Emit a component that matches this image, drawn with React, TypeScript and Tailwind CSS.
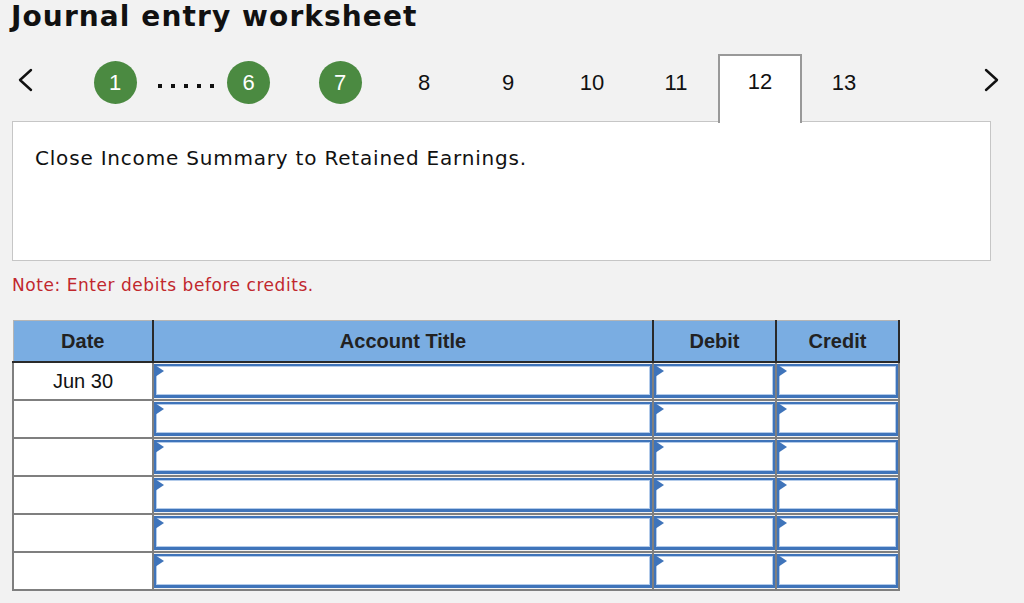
import React from "react";

// ── Data ───────────────────────────────────────────────────────────────────────

const ROWS = ["Jun 30", "", "", "", "", ""];
const PLAIN_STEPS = ["8", "9", "10", "11"];

// ── Pieces ─────────────────────────────────────────────────────────────────────

function Chevron({ dir }: { dir: "left" | "right" }) {
  return (
    <svg width="16" height="24" viewBox="0 0 16 24" fill="none">
      <polyline
        points={dir === "left" ? "14,2 3,12 14,22" : "2,2 13,12 2,22"}
        stroke="#111"
        strokeWidth="2.4"
        strokeLinecap="round"
        strokeLinejoin="round"
      />
    </svg>
  );
}

function DoneStep({ n }: { n: string }) {
  return (
    <div className="w-[43px] h-[43px] rounded-full bg-[#4b8a41] text-white flex items-center justify-center text-[22px]">
      {n}
    </div>
  );
}

function InputCell() {
  return (
    <td className="p-0 border-2 border-[#7f7f7f] h-[38px]">
      <div className="relative h-[34px] bg-white border-2 border-b-[3px] border-[#3f74ba] shadow-[inset_0_0_0_1px_#b3cbea]">
        <svg className="absolute -left-[1px] -top-[1px]" width="9" height="12" viewBox="0 0 9 12">
          <polygon points="0,0 9,6 0,12" fill="#3f74ba" />
        </svg>
      </div>
    </td>
  );
}

// ── Component ──────────────────────────────────────────────────────────────────

export default function App() {
  return (
    <div
      className="w-[1024px] h-[603px] overflow-hidden bg-[#f2f2f2] text-[#111]"
      style={{ fontFamily: '"DejaVu Sans", Verdana, sans-serif' }}
    >
      {/* Title */}
      <div className="h-[54px] pl-[11px]">
        <h1 className="text-[28px] leading-[33px] font-bold tracking-[1.1px]">Journal entry worksheet</h1>
      </div>

      {/* Step navigation */}
      <div
        className="flex items-start h-[67px] text-[22px]"
        style={{ fontFamily: '"Liberation Sans", Arial, sans-serif' }}
      >
        <div className="w-[73px] h-[52px] flex items-center pl-[17px]">
          <Chevron dir="left" />
        </div>
        <div className="w-[84px] h-[56px] flex items-center justify-center">
          <DoneStep n="1" />
        </div>
        <div className="w-[63px] h-[56px] flex items-center pt-[8px] pl-[1px] gap-[9px]">
          {[0, 1, 2, 3, 4].map((i) => (
            <span key={i} className="w-[4px] h-[4px] bg-[#111]" />
          ))}
        </div>
        <div className="w-[57px] h-[56px] flex items-center justify-center">
          <DoneStep n="6" />
        </div>
        <div className="w-[21px]" />
        <div className="w-[84px] h-[56px] flex items-center justify-center">
          <DoneStep n="7" />
        </div>
        {PLAIN_STEPS.map((s) => (
          <div key={s} className="w-[84px] h-[56px] flex items-center justify-center">
            {s}
          </div>
        ))}
        <div className="relative z-10 w-[84px] h-[69px] bg-white border-x-2 border-t-2 border-[#999] flex justify-center pt-[14px]">
          <span className="leading-[24px]">12</span>
        </div>
        <div className="w-[84px] h-[56px] flex items-center justify-center">13</div>
        <div className="flex-1 h-[52px] flex items-center justify-end pr-[24px]">
          <Chevron dir="right" />
        </div>
      </div>

      {/* Question panel */}
      <div className="ml-[12px] w-[979px] h-[140px] bg-white border border-[#c6c6c6] pl-[22px] pt-[23px]">
        <p className="text-[20px] leading-[26px] tracking-[0.8px]">Close Income Summary to Retained Earnings.</p>
      </div>

      <p className="ml-[12px] mt-[13px] text-[17px] leading-[22px] tracking-[0.55px] text-[#c1272d]">
        Note: Enter debits before credits.
      </p>

      {/* Journal table */}
      <table
        className="ml-[12px] mt-[24px] border-collapse table-fixed"
        style={{ fontFamily: '"Liberation Sans", Arial, sans-serif' }}
      >
        <colgroup>
          <col className="w-[140px]" />
          <col className="w-[500px]" />
          <col className="w-[123px]" />
          <col className="w-[123px]" />
        </colgroup>
        <thead>
          <tr className="bg-[#7aade2] text-[#222] text-[20px] font-bold">
            <th className="h-[41px] border-l border-t border-[#b5b5b5] border-r-2 border-r-[#2a2a2a] border-b-2 border-b-[#2a2a2a]">
              Date
            </th>
            <th className="border-t border-t-[#b5b5b5] border-r-2 border-r-[#2a2a2a] border-b-2 border-b-[#2a2a2a]">
              Account Title
            </th>
            <th className="border-t border-t-[#b5b5b5] border-r-2 border-r-[#2a2a2a] border-b-2 border-b-[#2a2a2a]">
              Debit
            </th>
            <th className="border-t border-t-[#b5b5b5] border-r-2 border-r-[#2a2a2a] border-b-2 border-b-[#2a2a2a]">
              Credit
            </th>
          </tr>
        </thead>
        <tbody>
          {ROWS.map((date, i) => (
            <tr key={i}>
              <td className="h-[38px] bg-white border-2 border-[#7f7f7f] text-center text-[20px] leading-[24px] align-middle">
                {date}
              </td>
              <InputCell />
              <InputCell />
              <InputCell />
            </tr>
          ))}
        </tbody>
      </table>
    </div>
  );
}
